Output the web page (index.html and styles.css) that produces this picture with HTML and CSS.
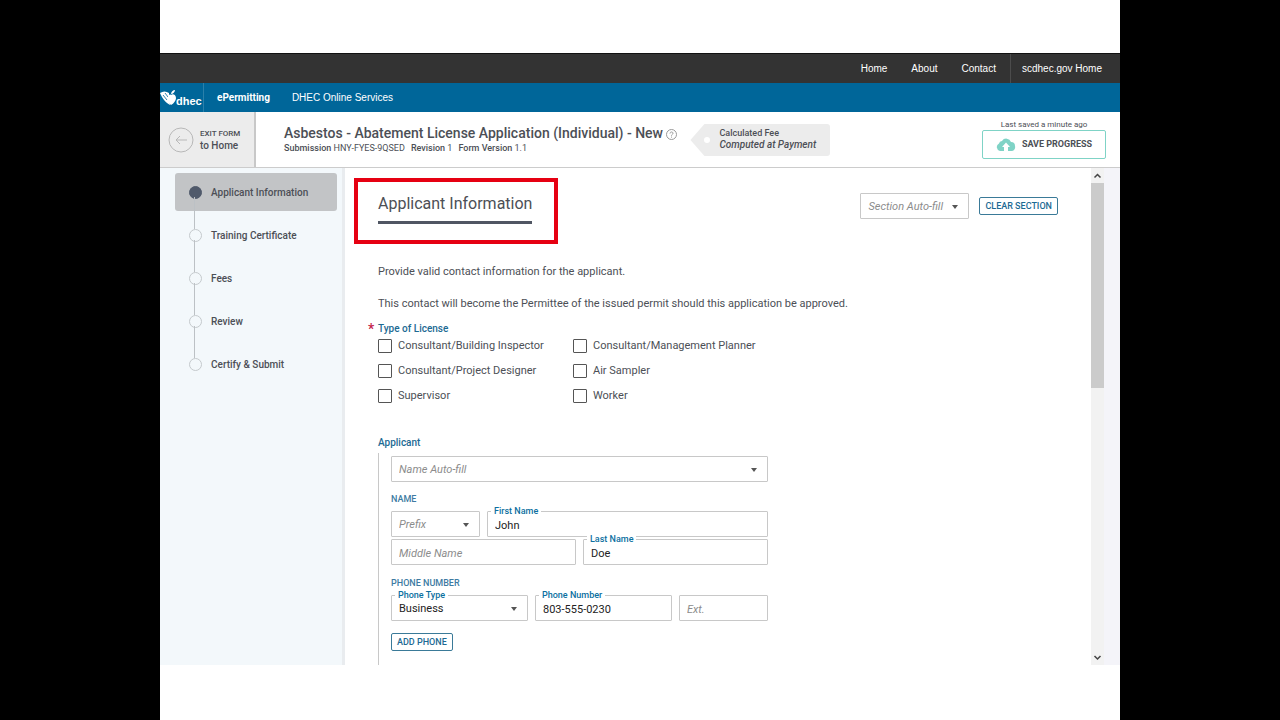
FILE: index.html
```html
<!DOCTYPE html>
<html lang="en">
<head>
  <meta charset="UTF-8">
  <meta name="viewport" content="width=device-width, initial-scale=1.0">
  <title>ePermitting - Applicant Information</title>
  <link rel="stylesheet" href="styles.css">
</head>
<body>
  <div class="page">

    <nav class="top-nav">
      <a href="#">Home</a>
      <a href="#">About</a>
      <a href="#">Contact</a>
      <a href="#" class="external">scdhec.gov Home</a>
    </nav>

    <nav class="main-nav">
      <a href="#" class="logo">
        <svg width="17" height="16" viewBox="0 0 17 16" fill="#fff">
          <path d="M0 3 C3 1 6 1 9 3 L9 10 L10 15 C6 13 2 8 0 3 Z"/>
          <path d="M3 5 L7 10 M5 3 L8 7" stroke="#006699" stroke-width="0.8" fill="none"/>
          <path d="M11 5 C13 3 16 5 16 8 C16 11 13 14 11 15 C8 13 7 10 8 7 C8 5 10 4 11 5 Z"/>
          <path d="M11 4 C11 2 13 0 15 0 C15 2 13 4 11 4 Z"/>
        </svg>
        <span>dhec</span>
      </a>
      <a href="#" class="current">ePermitting</a>
      <a href="#">DHEC Online Services</a>
    </nav>

    <header class="form-header">
      <a href="#" class="exit">
        <svg width="26" height="26" viewBox="0 0 26 26" fill="none" stroke="#b8b8b8">
          <circle cx="13" cy="13" r="12"/>
          <path d="M19 13 H8 M12 9 L8 13 L12 17"/>
        </svg>
        <span><small>EXIT FORM</small>to Home</span>
      </a>
      <div class="form-title">
        <h1>Asbestos - Abatement License Application (Individual) - New
          <svg width="11" height="11" viewBox="0 0 11 11" fill="none" stroke="#999">
            <circle cx="5.5" cy="5.5" r="5"/>
            <path d="M4 4.5 C4 2.5 7 2.5 7 4.3 C7 5.4 5.5 5.3 5.5 6.7 M5.5 7.6 V8.6"/>
          </svg>
        </h1>
        <p><span><b>Submission</b> HNY-FYES-9QSED</span><span><b>Revision</b> 1</span><span><b>Form Version</b> 1.1</span></p>
      </div>
      <div class="fee">
        <span>Calculated Fee</span>
        <em>Computed at Payment</em>
      </div>
      <div class="save">
        <span>Last saved a minute ago</span>
        <button type="button" class="save-button">
          <svg width="20" height="14" viewBox="0 0 20 14" fill="#7fd3c6">
            <path d="M4 13 A4 4 0 0 1 3 5.5 A3 3 0 0 1 6 3 A5 5 0 0 1 15 4 A4 4 0 0 1 19 8 A4 4 0 0 1 16 13 H12 V9 H14 L10 4.5 L6 9 H8 V13 Z"/>
          </svg>
          SAVE PROGRESS
        </button>
      </div>
    </header>

    <div class="content">
      <aside class="steps">
        <ol>
          <li class="active"><a href="#">Applicant Information</a></li>
          <li><a href="#">Training Certificate</a></li>
          <li><a href="#">Fees</a></li>
          <li><a href="#">Review</a></li>
          <li><a href="#">Certify &amp; Submit</a></li>
        </ol>
      </aside>

      <main class="section">
        <div class="section-head">
          <h2>Applicant Information</h2>
          <div class="section-tools">
            <div class="field select">
              <select class="empty" aria-label="Section Auto-fill"><option>Section Auto-fill</option></select>
            </div>
            <button type="button" class="small-button">CLEAR SECTION</button>
          </div>
        </div>

        <div class="intro">
          <p>Provide valid contact information for the applicant.</p>
          <p>This contact will become the Permittee of the issued permit should this application be approved.</p>
        </div>

        <fieldset class="license">
          <legend class="required">Type of License</legend>
          <div class="checks">
            <label><input type="checkbox">Consultant/Building Inspector</label>
            <label><input type="checkbox">Consultant/Management Planner</label>
            <label><input type="checkbox">Consultant/Project Designer</label>
            <label><input type="checkbox">Air Sampler</label>
            <label><input type="checkbox">Supervisor</label>
            <label><input type="checkbox">Worker</label>
          </div>
        </fieldset>

        <fieldset class="applicant">
          <legend>Applicant</legend>
          <div class="group">
            <div class="field select">
              <select class="empty" aria-label="Name Auto-fill"><option>Name Auto-fill</option></select>
            </div>

            <h3>NAME</h3>
            <div class="row first-row">
              <div class="field select">
                <select class="empty" aria-label="Prefix"><option>Prefix</option></select>
              </div>
              <div class="field">
                <label for="first-name">First Name</label>
                <input type="text" id="first-name" value="John">
              </div>
            </div>
            <div class="row last-row">
              <div class="field">
                <input type="text" placeholder="Middle Name" aria-label="Middle Name">
              </div>
              <div class="field">
                <label for="last-name">Last Name</label>
                <input type="text" id="last-name" value="Doe">
              </div>
            </div>

            <h3>PHONE NUMBER</h3>
            <div class="row phone-row">
              <div class="field select">
                <label for="phone-type">Phone Type</label>
                <select id="phone-type"><option>Business</option></select>
              </div>
              <div class="field">
                <label for="phone">Phone Number</label>
                <input type="text" id="phone" value="803-555-0230">
              </div>
              <div class="field">
                <input type="text" placeholder="Ext." aria-label="Ext.">
              </div>
            </div>
            <button type="button" class="small-button">ADD PHONE</button>
          </div>
        </fieldset>
      </main>

      <div class="scrollbar">
        <svg width="13" height="15" viewBox="0 0 13 15" fill="none" stroke="#444" stroke-width="1.5"><path d="M3.5 9.5 L6.5 6.5 L9.5 9.5"/></svg>
        <div class="track"><div class="thumb"></div></div>
        <svg width="13" height="15" viewBox="0 0 13 15" fill="none" stroke="#444" stroke-width="1.5"><path d="M3.5 6 L6.5 9 L9.5 6"/></svg>
      </div>
    </div>

  </div>
</body>
</html>
```
FILE: styles.css
```css
:root {
  --blue: #006699;
  --text: #4c4f56;
  --line: #c8c8c8;
  --link: #1c6a93;
}

* {
  margin: 0;
  padding: 0;
  box-sizing: border-box;
}

body {
  background-color: #000;
  color: var(--text);
  font-family: Roboto, "Liberation Sans", sans-serif;
  font-size: 11px;
  line-height: 16px;
}

a {
  color: inherit;
  text-decoration: none;
}

button, input, select {
  font: inherit;
  color: inherit;
}

.page {
  width: 75%;
  min-height: 100vh;
  margin: 0 auto;
  padding: 53px 0;
  background-color: #fff;
}

/* navigation bars */
.top-nav, .main-nav {
  display: flex;
  align-items: center;
  color: #fff;
  font-family: "Liberation Sans", Arial, sans-serif;
  font-size: 10px;
}

.top-nav {
  justify-content: flex-end;
  gap: 24px;
  height: 30px;
  padding-right: 18px;
  background-color: #333;
  border-top: 1px solid #111;
}

.top-nav .external {
  margin-left: -10px;
  padding-left: 11px;
  line-height: 29px;
  border-left: 1px solid #4c4c4c;
}

.main-nav {
  gap: 22px;
  height: 29px;
  background-color: var(--blue);
}

.logo {
  display: flex;
  align-items: center;
  width: 44px;
  height: 100%;
  margin-right: -9px;
  border-right: 1px solid #2b80aa;
}

.logo svg {
  flex: none;
}

.logo span {
  margin-left: -1px;
  padding-top: 6px;
  font-size: 11px;
  font-weight: bold;
}

.current {
  font-family: Roboto, sans-serif;
  font-weight: bold;
}

/* form header */
.form-header {
  display: flex;
  height: 56px;
  border-bottom: 1px solid #ccc;
}

.exit {
  display: flex;
  align-items: center;
  gap: 6px;
  width: 96px;
  padding-left: 8px;
  background-color: #ececec;
  border-right: 2px solid #c8c8c8;
  font-size: 10px;
  font-weight: 500;
  line-height: 12px;
}

.exit small {
  display: block;
  font-size: 8px;
}

.form-title {
  padding: 13px 0 0 28px;
}

.form-title h1 {
  font-size: 14px;
  font-weight: 500;
  line-height: 17px;
  white-space: nowrap;
}

.form-title svg {
  vertical-align: -2px;
}

.form-title p {
  display: flex;
  gap: 6px;
  font-size: 9px;
  line-height: 12px;
}

.form-title b {
  font-weight: 500;
}

.fee {
  position: relative;
  align-self: flex-start;
  display: flex;
  flex-direction: column;
  width: 140px;
  height: 32px;
  margin: 12px 0 0 13px;
  padding: 3px 0 0 29px;
  background-color: #ececec;
  border-radius: 3px;
  clip-path: polygon(14px 0, 100% 0, 100% 100%, 14px 100%, 0 50%);
  font-size: 9px;
  font-weight: 500;
  line-height: 12px;
  white-space: nowrap;
}

.fee::before {
  content: "";
  position: absolute;
  top: 13px;
  left: 14px;
  width: 6px;
  height: 6px;
  border-radius: 50%;
  background-color: #fff;
}

.fee em {
  font-size: 10px;
}

.save {
  margin-left: auto;
  padding: 7px 14px 0 0;
  font-size: 8px;
  line-height: 11px;
  text-align: center;
}

.save-button {
  display: flex;
  align-items: center;
  justify-content: center;
  gap: 6px;
  width: 124px;
  height: 29px;
  background-color: #fff;
  border: 1px solid #7fd3c6;
  border-radius: 2px;
  font-size: 9px;
  font-weight: bold;
}

/* steps */
.content {
  display: flex;
  background-color: #f4f4f9;
}

.steps {
  flex: none;
  width: 185px;
  padding: 5px 5px 0 15px;
  background-color: #f3f8fb;
  border-right: 3px solid #e9ecef;
}

.steps ol {
  display: flex;
  flex-direction: column;
  gap: 5px;
  list-style: none;
}

.steps li {
  position: relative;
  height: 38px;
  padding-left: 36px;
  border-radius: 3px;
  font-size: 10px;
  font-weight: 500;
  line-height: 39px;
}

.steps .active {
  background-color: #c2c4c6;
}

.steps li::before {
  content: "";
  position: absolute;
  top: 13px;
  left: 14px;
  width: 11px;
  height: 11px;
  border: 1px solid #c5cacd;
  border-radius: 50%;
}

.steps .active::before {
  background-color: #505a6b;
  border-color: #505a6b;
}

.steps li:not(:last-child)::after {
  content: "";
  position: absolute;
  top: 24px;
  left: 19px;
  width: 1px;
  height: 32px;
  background-color: #bcc1c5;
}

/* section */
.section {
  flex: 1;
  padding: 24px 33px 0;
  background-color: #fff;
}

.section-head {
  display: flex;
  justify-content: space-between;
  align-items: flex-start;
}

.section-head h2 {
  position: relative;
  padding-bottom: 5px;
  border-bottom: 3px solid #505663;
  font-size: 16px;
  font-weight: normal;
  line-height: 24px;
}

.section-head h2::after {
  content: "";
  position: absolute;
  inset: -14px -26px -23px -24px;
  border: 4px solid #e60012;
}

.section-tools {
  display: flex;
  align-items: center;
  gap: 10px;
  margin-top: 1px;
}

.section-tools .field {
  width: 109px;
}

.small-button {
  display: block;
  height: 18px;
  padding: 0 5px;
  background-color: #fff;
  border: 1px solid #3a7a98;
  border-radius: 2px;
  color: var(--link);
  font-size: 9px;
  font-weight: 500;
  line-height: 14px;
}

.intro {
  display: flex;
  flex-direction: column;
  gap: 12px;
  margin: 38px 0 7px;
  line-height: 20px;
}

fieldset {
  border: none;
}

legend {
  position: relative;
  color: var(--link);
  font-size: 10px;
  font-weight: 500;
}

.required::before {
  content: "*";
  position: absolute;
  left: -10px;
  color: #c4224a;
  font-size: 14px;
}

.checks {
  display: grid;
  grid-template-columns: 195px 195px;
  gap: 12px 0;
  padding-top: 2px;
}

.checks label {
  display: flex;
  align-items: center;
  gap: 6px;
  height: 13px;
}

.checks input {
  appearance: none;
  width: 14px;
  height: 14px;
  background-color: #fff;
  border: 1px solid #555;
  border-radius: 1px;
}

.checks input:checked {
  background-color: var(--blue);
}

.applicant {
  max-width: 390px;
  margin-top: 33px;
}

.group {
  margin-top: 2px;
  padding: 3px 0 14px 12px;
  border-left: 1px solid var(--line);
}

.group h3 {
  margin: 9px 0 4px;
  color: #3d7ba2;
  font-size: 9px;
  font-weight: 500;
}

.row {
  display: grid;
  gap: 7px;
}

.first-row {
  grid-template-columns: 89px 1fr;
}

.last-row {
  grid-template-columns: 1fr 1fr;
  margin: 2px 0 10px;
}

.phone-row {
  grid-template-columns: 137px 137px 1fr;
  margin-bottom: 12px;
}

.field {
  position: relative;
}

.field input, .field select {
  display: block;
  appearance: none;
  width: 100%;
  height: 26px;
  padding: 2px 7px 0;
  background-color: #fff;
  border: 1px solid var(--line);
  border-radius: 1px;
  color: #222;
}

.field .empty, .field input::placeholder {
  color: #8c8c8c;
  font-style: italic;
}

.field label {
  position: absolute;
  top: -5px;
  left: 4px;
  padding: 0 3px;
  background-color: #fff;
  color: #0b6f9f;
  font-size: 9px;
  font-weight: 500;
  line-height: 10px;
}

.select::after {
  content: "";
  position: absolute;
  top: 12px;
  right: 11px;
  border: 3px solid transparent;
  border-top: 4px solid #555;
  border-bottom: none;
}

/* scrollbar */
.scrollbar {
  display: flex;
  flex-direction: column;
  width: 13px;
  margin-right: 16px;
  background-color: #f2f2f2;
}

.track {
  flex: 1;
}

.thumb {
  height: 44%;
  background-color: #cbcbcb;
}
```
